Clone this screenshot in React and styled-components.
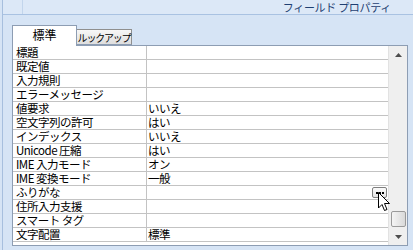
import React from "react";
import styled, { createGlobalStyle } from "styled-components";

const GlobalStyle = createGlobalStyle`
  html, body {
    margin: 0;
    padding: 0;
  }
  body {
    font-family: "Noto Sans CJK JP", "DejaVu Sans", sans-serif;
    background: #d6e4f5;
  }
`;

const Page = styled.div`
  width: 413px;
  height: 250px;
  background: #d6e4f5;
  padding-left: 2px;
  box-sizing: border-box;
  position: relative;
  overflow: hidden;
`;

const Body = styled.div`
  height: 100%;
  border-left: 1px solid #a7bfde;
  display: flex;
  flex-direction: column;
`;

const Header = styled.div`
  height: 14px;
  border-bottom: 1px solid #a9c2e2;
  background: #dce8f7;
  display: flex;
  align-items: center;
`;

const HeaderNotch = styled.div`
  width: 19px;
  height: 100%;
  border-right: 1px solid #c2d5ec;
`;

const Title = styled.div`
  margin-left: auto;
  margin-right: 22px;
  font-size: 11px;
  line-height: 13px;
  color: #1f3f72;
  letter-spacing: -0.3px;
  white-space: nowrap;
`;

const TabRow = styled.div`
  display: flex;
  align-items: flex-end;
  margin-top: 10px;
  margin-left: 9px;
  height: 20px;
  position: relative;
  z-index: 1;
`;

const Tab = styled.div`
  box-sizing: border-box;
  width: ${p => p.$width}px;
  height: ${p => (p.$active ? 21 : 16)}px;
  margin-bottom: ${p => (p.$active ? -1 : 0)}px;
  border: 1px solid ${p => (p.$active ? "#8d9db3" : "#8f8f8f")};
  border-bottom: ${p => (p.$active ? "none" : "1px solid #8d9db3")};
  border-left: ${p => (p.$active ? "1px solid #8d9db3" : "none")};
  background: ${p => (p.$active ? "#ffffff" : "linear-gradient(#f7f7f7, #dedede)")};
  display: flex;
  justify-content: center;
  align-items: center;
  white-space: nowrap;
  font-size: ${p => (p.$active ? 12 : 10)}px;
  letter-spacing: ${p => (p.$active ? 0 : -1.2)}px;
  color: #000;
  padding-bottom: ${p => (p.$active ? 3 : 0)}px;
`;

const Panel = styled.div`
  margin-left: 9px;
  width: 396px;
  height: 201px;
  box-sizing: border-box;
  border: 1px solid #8d9db3;
  background: #ffffff;
  display: flex;
`;

const Grid = styled.div`
  flex: 1;
  display: flex;
  flex-direction: column;
`;

const Row = styled.div`
  display: grid;
  grid-template-columns: 134px 1fr;
  height: 14px;
  box-sizing: border-box;
  border-bottom: 1px solid #c3c3c3;
`;

const Label = styled.div`
  border-right: 1px solid #c3c3c3;
  padding-left: 3px;
  font-size: 11.5px;
  line-height: 13px;
  white-space: nowrap;
  letter-spacing: -0.5px;
  color: #000;
`;

const Value = styled.div`
  padding-left: 1px;
  font-size: 11.5px;
  line-height: 13px;
  white-space: nowrap;
  display: flex;
  align-items: center;
  letter-spacing: -0.5px;
  color: #000;
`;

const DotsButton = styled.div`
  margin-left: auto;
  margin-right: 1px;
  width: 13px;
  height: 9px;
  border: 1px solid #7f7f7f;
  border-radius: 2px;
  background: linear-gradient(#fbfbfb, #e4e4e4);
  display: flex;
  justify-content: center;
  align-items: center;
  gap: 1px;
`;

const Dot = styled.span`
  width: 2px;
  height: 2px;
  background: #000;
`;

const Scrollbar = styled.div`
  width: 18px;
  background: #efefef;
  border-left: 1px solid #e2e2e2;
  display: flex;
  flex-direction: column;
`;

const ArrowButton = styled.div`
  height: 17px;
  display: flex;
  justify-content: center;
  align-items: center;
`;

const Track = styled.div`
  flex: 1;
  display: flex;
  flex-direction: column;
  justify-content: flex-end;
  padding-bottom: 1px;
`;

const Thumb = styled.div`
  margin-left: 2px;
  width: 13px;
  height: 14px;
  border: 1px solid #9a9a9a;
  border-radius: 2px;
  background: linear-gradient(90deg, #f4f4f4, #d9d9d9);
`;

const Cursor = styled.svg`
  position: absolute;
  left: 378px;
  top: 192px;
`;

const rows = [
  ["標題", ""],
  ["既定値", ""],
  ["入力規則", ""],
  ["エラーメッセージ", ""],
  ["値要求", "いいえ"],
  ["空文字列の許可", "はい"],
  ["インデックス", "いいえ"],
  ["Unicode 圧縮", "はい"],
  ["IME 入力モード", "オン"],
  ["IME 変換モード", "一般"],
  ["ふりがな", "", true],
  ["住所入力支援", ""],
  ["スマート タグ", ""],
  ["文字配置", "標準"],
];

function Arrow({ up }) {
  return (
    <svg width="7" height="4" viewBox="0 0 7 4">
      {up ? (
        <polygon points="3.5,0 7,4 0,4" fill="#4d4d4d" />
      ) : (
        <polygon points="0,0 7,0 3.5,4" fill="#4d4d4d" />
      )}
    </svg>
  );
}

function PropertyRow({ label, value, hasButton }) {
  return (
    <Row>
      <Label>{label}</Label>
      <Value>
        {value}
        {hasButton && (
          <DotsButton>
            <Dot />
            <Dot />
            <Dot />
          </DotsButton>
        )}
      </Value>
    </Row>
  );
}

const App = () => {
  return (
    <Page>
      <GlobalStyle />
      <Body>
        <Header>
          <HeaderNotch />
          <Title>フィールド プロパティ</Title>
        </Header>

        <TabRow>
          <Tab $active $width={65}>標準</Tab>
          <Tab $width={55}>ルックアップ</Tab>
        </TabRow>

        <Panel>
          <Grid>
            {rows.map(([label, value, btn]) => (
              <PropertyRow key={label} label={label} value={value} hasButton={btn} />
            ))}
          </Grid>
          <Scrollbar>
            <ArrowButton>
              <Arrow up />
            </ArrowButton>
            <Track>
              <Thumb />
            </Track>
            <ArrowButton>
              <Arrow />
            </ArrowButton>
          </Scrollbar>
        </Panel>
      </Body>

      <Cursor width="13" height="20" viewBox="0 0 13 20">
        <path
          d="M0.5 0.5 L0.5 16 L4 12.5 L6.5 18.5 L9 17.5 L6.5 11.5 L11.5 11.5 Z"
          fill="#ffffff"
          stroke="#000000"
          strokeWidth="1"
          strokeLinejoin="round"
        />
      </Cursor>
    </Page>
  );
};

export default App;
